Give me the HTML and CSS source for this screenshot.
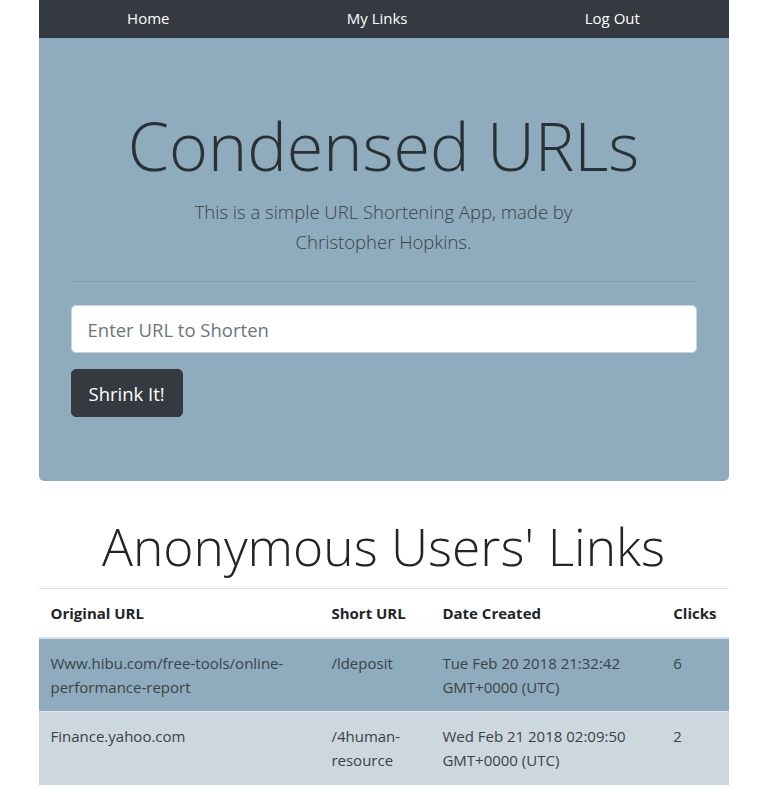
FILE: index.html
```html
<!DOCTYPE html>
<html lang="en">
<head>
<meta charset="utf-8">
<title>Condensed URLs</title>
<link rel="stylesheet" href="styles.css">
</head>
<body>
<div class="container">
  <nav class="navbar">
    <a class="nav-link" href="#">Home</a>
    <a class="nav-link" href="#">My Links</a>
    <a class="nav-link" href="#">Log Out</a>
  </nav>
  <section class="jumbotron">
    <h1 class="display-3">Condensed URLs</h1>
    <p class="lead">This is a simple URL Shortening App, made by Christopher Hopkins.</p>
    <hr class="divider">
    <form class="shorten-form">
      <input class="form-control" type="text" placeholder="Enter URL to Shorten">
      <button class="btn-dark" type="button">Shrink It!</button>
    </form>
  </section>
  <h1 class="display-4">Anonymous Users' Links</h1>
  <table class="links-table">
    <thead>
      <tr>
        <th class="col-orig">Original URL</th>
        <th class="col-short">Short URL</th>
        <th class="col-date">Date Created</th>
        <th class="col-clicks">Clicks</th>
      </tr>
    </thead>
    <tbody>
      <tr class="row-dark">
        <td>Www.hibu.com/free-tools/online-performance-report</td>
        <td>/ldeposit</td>
        <td>Tue Feb 20 2018 21:32:42 GMT+0000 (UTC)</td>
        <td>6</td>
      </tr>
      <tr class="row-light">
        <td>Finance.yahoo.com</td>
        <td>/4human-resource</td>
        <td>Wed Feb 21 2018 02:09:50 GMT+0000 (UTC)</td>
        <td>2</td>
      </tr>
    </tbody>
  </table>
</div>
</body>
</html>
```
FILE: styles.css
```css
* { box-sizing: border-box; }
html, body { margin: 0; padding: 0; }
body {
  font-family: "Open Sans", "Noto Sans", sans-serif;
  font-size: 16px;
  line-height: 1.5;
  color: #212529;
  background: #fff;
}
.container {
  width: 690px;
  margin: 0 auto;
}
.navbar {
  display: flex;
  justify-content: space-around;
  height: 38px;
  padding-bottom: 3px;
  align-items: center;
  background: #343a40;
}
.nav-link {
  color: #fff;
  text-decoration: none;
  font-size: 15px;
  line-height: 22px;
}
.jumbotron {
  background: #8eacbd;
  padding: 64px 32px;
  border-radius: 0 0 5px 5px;
  margin-bottom: 32px;
  text-align: center;
}
.display-3 {
  margin: 0 0 8px;
  font-size: 66.5px;
  font-weight: 300;
  line-height: 87px;
  color: #2b3035;
}
.lead {
  margin: 0 auto 16px;
  max-width: 400px;
  font-size: 18.5px;
  font-weight: 300;
  line-height: 30px;
  color: #3a4247;
}
.divider {
  margin: 24px 0 23px;
  border: 0;
  border-top: 1px solid rgba(0,0,0,0.1);
}
.shorten-form {
  display: flex;
  flex-direction: column;
  align-items: flex-start;
  gap: 16px;
}
.form-control {
  width: 100%;
  height: 48px;
  padding: 8px 16px;
  font-family: inherit;
  font-size: 18.5px;
  color: #495057;
  background: #fff;
  border: 1px solid #ced4da;
  border-radius: 5px;
}
.form-control::placeholder { color: #6c757d; }
.btn-dark {
  height: 48px;
  padding: 0 17px;
  font-family: inherit;
  font-size: 18.5px;
  color: #fff;
  background: #343a40;
  border: 1px solid #343a40;
  border-radius: 5px;
}
.display-4 {
  margin: 0 0 8px;
  text-align: center;
  font-size: 51.5px;
  font-weight: 300;
  line-height: 67px;
  color: #212529;
}
.links-table {
  width: 100%;
  border-collapse: collapse;
  border-top: 1px solid #dee2e6;
}
.links-table th, .links-table td {
  padding: 12px;
  text-align: left;
  vertical-align: top;
  font-size: 15px;
  line-height: 24px;
}
.links-table th {
  font-weight: 700;
  border-bottom: 2px solid #dee2e6;
  padding-top: 12px;
  padding-bottom: 12px;
}
.links-table td {
  color: #3a4247;
  border-top: 1px solid #dee2e6;
}
.col-orig { width: 281px; }
.col-short { width: 111px; }
.col-date { width: 231px; }
.col-clicks { width: 67px; }
.row-dark { background: #8eacbd; }
.row-light { background: #cdd7de; }
.row-dark td { border-top-color: #8eacbd; }
.row-light td { border-top-color: #dee2e6; }
.row-light td { padding-bottom: 13px; }
```
